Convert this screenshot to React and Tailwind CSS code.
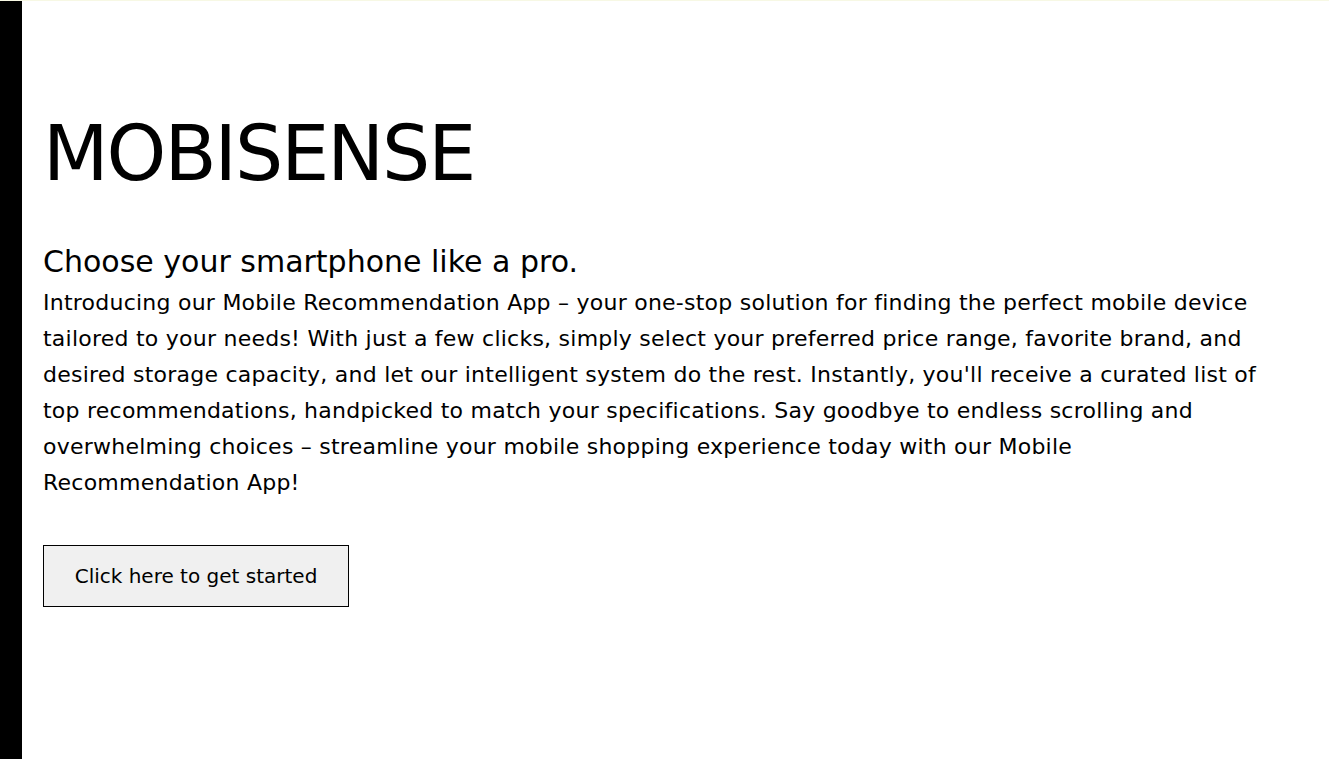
import React from "react";

export default function App() {
  return (
    <div className="min-h-screen bg-white border-t border-[#f7f8e4] flex">
      <div className="w-[22px] bg-black shrink-0 min-h-[758px]"></div>
      <main className="pl-[21px] pr-[40px] font-['DejaVu_Sans',sans-serif] text-black">
        <h1 className="mt-[115px] text-[76px] leading-none tracking-[-2px]">MOBISENSE</h1>
        <h2 className="mt-[52px] text-[30px] leading-[36px]">Choose your smartphone like a pro.</h2>
        <p className="mt-[5px] w-[1224px] text-[22px] leading-[36px] tracking-[0.24px]">
          Introducing our Mobile Recommendation App – your one-stop solution for finding the perfect mobile device
          tailored to your needs! With just a few clicks, simply select your preferred price range, favorite brand, and
          desired storage capacity, and let our intelligent system do the rest. Instantly, you'll receive a curated list of
          top recommendations, handpicked to match your specifications. Say goodbye to endless scrolling and
          overwhelming choices – streamline your mobile shopping experience today with our Mobile Recommendation App!
        </p>
        <button className="mt-[44px] w-[306px] h-[62px] bg-[#f0f0f0] border border-black text-[20px] text-black">
          Click here to get started
        </button>
      </main>
    </div>
  );
}
